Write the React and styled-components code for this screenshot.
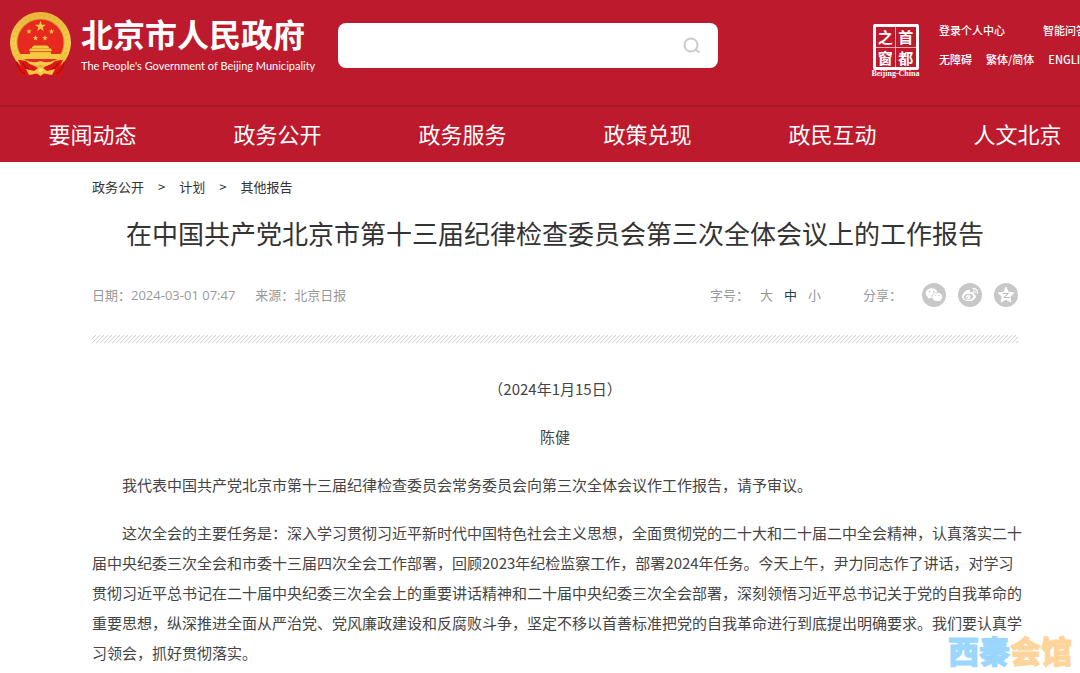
import React from 'react';
import styled, { createGlobalStyle } from 'styled-components';
import { RiWechatFill } from 'react-icons/ri';
import { FaWeibo } from 'react-icons/fa';


const GlobalStyle = createGlobalStyle`
    * {
        box-sizing: border-box;
    }
    body {
        margin: 0;
        background-color: #fff;
        color: #444;
        font-family: "Noto Sans CJK SC", sans-serif;
    }
    a {
        color: inherit;
        text-decoration: none;
    }
    button {
        padding: 0;
        border: 0;
        background: none;
        color: inherit;
        font: inherit;
        cursor: pointer;
    }
`

const Page = styled.div`
    position: relative;
    min-height: 100vh;
    overflow: hidden;
`

const Header = styled.header`
    background-color: #bd1a2d;
    color: #fff;
    white-space: nowrap;
`

const TopBar = styled.div`
    display: flex;
    align-items: flex-start;
    height: 105px;
    overflow: hidden;
`

const Brand = styled.a`
    display: flex;
    flex: 0 0 338px;
    gap: 8px;
    padding: 11px 0 0 9px;
`

const BrandText = styled.div`
    padding-top: 4px;
`

const BrandName = styled.div`
    font-size: 32px;
    font-weight: 700;
    line-height: 36px;
`

const BrandSub = styled.div`
    margin-top: 7px;
    font-family: Lato, "Noto Sans", sans-serif;
    font-size: 11px;
    line-height: 16px;
`

const SearchForm = styled.form`
    display: flex;
    align-items: center;
    flex: 0 1 380px;
    height: 45px;
    margin-top: 23px;
    padding: 0 16px;
    border-radius: 8px;
    background-color: #fff;
`

const SearchInput = styled.input`
    flex: 1;
    min-width: 0;
    height: 40px;
    border: 0;
    outline: 0;
    background: none;
    font-size: 16px;
`

const SearchButton = styled.button`
    display: flex;
`

const Tools = styled.div`
    display: flex;
    flex: 0 0 210px;
    gap: 18px;
    min-width: 0;
    margin-left: auto;
    padding-top: 20px;
`

const Seal = styled.a`
    display: flex;
    flex: 0 0 51px;
    flex-direction: column;
    align-items: center;
    padding-top: 4px;
`

const SealGrid = styled.div`
    display: grid;
    grid-template-columns: 1fr 1fr;
    gap: 1px;
    width: 46px;
    height: 46px;
    border: 3px solid #fff;
    border-radius: 2px;
    background-color: #e8a9b1;
`

const SealChar = styled.span`
    background-color: #bd1a2d;
    font-size: 15px;
    font-weight: 700;
    line-height: 19px;
    text-align: center;
`

const SealCaption = styled.span`
    font-family: "Liberation Serif", serif;
    font-size: 8px;
    font-weight: 700;
    line-height: 8px;
`

const ToolLinks = styled.div`
    display: flex;
    flex: none;
    flex-direction: column;
    gap: 9px;
`

const ToolRow = styled.div`
    display: flex;
    gap: ${props => props.$gap};
    font-size: 11px;
    font-weight: 500;
    line-height: 20px;
`

const Nav = styled.nav`
    display: flex;
    overflow: hidden;
    padding-bottom: 2px;
    border-top: 2px solid #a81728;
`

const NavLink = styled.a`
    flex: 0 0 185px;
    font-size: 22px;
    line-height: 53px;
    text-align: center;
`

const Article = styled.main`
    padding: 15px 62px 0 92px;
`

const Crumbs = styled.nav`
    display: flex;
    gap: 14px;
    color: #333;
    font-size: 13px;
    line-height: 20px;
`

const Title = styled.h1`
    margin: 18px 0 0;
    color: #333;
    font-size: 26px;
    font-weight: 400;
    line-height: 36px;
    text-align: center;
`

const Meta = styled.div`
    display: flex;
    align-items: center;
    margin-top: 32px;
    color: #999;
    font-family: "Open Sans", "Noto Sans CJK SC", sans-serif;
    font-size: 13px;
    line-height: 24px;
`

const Source = styled.span`
    margin-left: 20px;
`

const SizePicker = styled.div`
    display: flex;
    gap: 11px;
    margin-left: auto;
`

const SizeButton = styled.button`
    color: ${props => props.$active ? '#1d4350' : '#999'};
`

const Share = styled.div`
    display: flex;
    gap: 12px;
    margin-left: 42px;
`

const ShareLabel = styled.span`
    margin-right: 8px;
`

const ShareButton = styled.button`
    display: flex;
    align-items: center;
    justify-content: center;
    width: 24px;
    height: 24px;
    border-radius: 50%;
    background-color: #c8c8c8;
    color: #fff;
`

const Divider = styled.div`
    height: 8px;
    margin: 28px 0 31px;
    background-image: linear-gradient(135deg, transparent 36%, #d2d2d2 50%, transparent 64%);
    background-size: 4px 4px;
`

const Line = styled.p`
    margin: 0 0 18px;
    font-size: 15px;
    line-height: 30px;
    text-align: center;
`

const Paragraph = styled(Line)`
    margin-right: -6px;
    text-align: left;
    text-indent: 2em;

    &:last-child {
        margin-bottom: 0;
    }
`

const Watermark = styled.div`
    position: absolute;
    right: 8px;
    bottom: 5px;
    color: #9ad6fd;
    font-size: 31px;
    font-weight: 900;
    line-height: 36px;
    -webkit-text-stroke: 1px currentColor;
    pointer-events: none;
`

const WatermarkWarm = styled.span`
    color: #fdd59b;
`


const STAR = 'M0 -5 L1.2 -1.6 L4.8 -1.5 L1.9 .6 L2.9 4 L0 2 L-2.9 4 L-1.9 .6 L-4.8 -1.5 L-1.2 -1.6 Z';

const Emblem = () => (
    <svg width="64" height="68" viewBox="0 0 64 68" aria-hidden="true">
        <defs>
            <linearGradient id="gold" x1="0" y1="0" x2="0" y2="1">
                <stop offset="0" stopColor="#e9b53a" />
                <stop offset=".5" stopColor="#f5cf50" />
                <stop offset="1" stopColor="#eeb82f" />
            </linearGradient>
        </defs>
        <path d="M9 48 L8 62 Q13 67 20 64 L31 66 L43 64 Q50 67 55 62 L54 48 Z" fill="#d81414" />
        <circle cx="31.5" cy="31.5" r="30.5" fill="url(#gold)" />
        <circle cx="31.5" cy="31.5" r="27" fill="none" stroke="#d99a26" strokeWidth="3" strokeDasharray="2 3" opacity=".25" />
        <circle cx="31.5" cy="31.5" r="24" fill="#d79b27" />
        <circle cx="31.5" cy="31.5" r="23" fill="#e8291f" />
        <g fill="#f6c945">
            <path d={STAR} transform="translate(31.5 15.5) scale(1.15)" />
            <path d={STAR} transform="translate(20 20.5) scale(.6)" />
            <path d={STAR} transform="translate(42.5 20.5) scale(.6)" />
            <path d={STAR} transform="translate(26.5 27) scale(.6)" />
            <path d={STAR} transform="translate(36 27) scale(.6)" />
            <path d="M23 36 L25 34.5 H38 L40 36 V37.5 H42 L43 40 H20 L21 37.5 H23 Z" />
            <path d="M21 41 H42 V43 H52 L50 48 H13 L11 43 H21 Z" />
        </g>
        <path d="M23 37.5 H40 M21 41 H42" stroke="#e9a32e" strokeWidth="1" />
        <path d="M9 49 Q17 49 24 54 L29 57 L23 65 Q14 61 9 49 Z" fill="#dc1816" />
        <path d="M54 49 Q46 49 39 54 L34 57 L40 65 Q49 61 54 49 Z" fill="#dc1816" />
        <path d="M17 49 Q24 53 31.5 50 Q39 53 46 49 Q42 56 31.5 54.5 Q21 56 17 49 Z" fill="#f4cb4e" />
        <path d="M17 58 L25 60 L29 57 H34 L38 60 L46 58 L43 64 L35 62.5 L31.5 65 L28 62.5 L20 64 Z" fill="#f6c83f" />
        <path d="M8 51 Q9 60 16 63 M55 51 Q54 60 47 63 M14 52 Q16 57 20 58 M49 52 Q47 57 43 58" fill="none" stroke="#a90d12" strokeWidth="1.2" />
        <circle cx="31.5" cy="59.5" r="2" fill="#fbe27a" />
    </svg>
)

const SearchIcon = () => (
    <svg width="20" height="20" viewBox="0 0 20 20" fill="none" stroke="#ccc" strokeWidth="2" aria-hidden="true">
        <circle cx="9" cy="9" r="6.5" />
        <path d="M13 13 L17.5 16.5" />
    </svg>
)

const QzoneIcon = () => (
    <svg width="18" height="18" viewBox="0 0 18 18" aria-hidden="true">
        <path d="M9 1.2 L11.3 6.2 L16.9 6.9 L12.8 10.6 L13.9 16 L9 13.3 L4.1 16 L5.2 10.6 L1.1 6.9 L6.7 6.2 Z" fill="#fff" stroke="#fff" strokeLinejoin="round" />
        <path d="M6 7.5 H11.5 L6.8 11.5 H12.5" fill="none" stroke="#b8b8b8" strokeWidth="1" />
    </svg>
)

const navItems = ['要闻动态', '政务公开', '政务服务', '政策兑现', '政民互动', '人文北京'];


const App = () => {


    return(
        <Page>
            <GlobalStyle />
            <Header>
                <TopBar>
                    <Brand href="#">
                        <Emblem />
                        <BrandText>
                            <BrandName>北京市人民政府</BrandName>
                            <BrandSub>The People's Government of Beijing Municipality</BrandSub>
                        </BrandText>
                    </Brand>
                    <SearchForm role="search">
                        <SearchInput type="text" aria-label="搜索" />
                        <SearchButton type="button" aria-label="搜索"><SearchIcon /></SearchButton>
                    </SearchForm>
                    <Tools>
                        <Seal href="#">
                            <SealGrid>
                                <SealChar>之</SealChar>
                                <SealChar>首</SealChar>
                                <SealChar>窗</SealChar>
                                <SealChar>都</SealChar>
                            </SealGrid>
                            <SealCaption>Beijing-China</SealCaption>
                        </Seal>
                        <ToolLinks>
                            <ToolRow $gap="38px">
                                <a href="#">登录个人中心</a>
                                <a href="#">智能问答</a>
                            </ToolRow>
                            <ToolRow $gap="14px">
                                <a href="#">无障碍</a>
                                <a href="#">繁体/简体</a>
                                <a href="#">ENGLISH</a>
                            </ToolRow>
                        </ToolLinks>
                    </Tools>
                </TopBar>
                <Nav>
                    {navItems.map(item => <NavLink href="#" key={item}>{item}</NavLink>)}
                </Nav>
            </Header>
            <Article>
                <Crumbs>
                    <a href="#">政务公开</a>
                    <span>&gt;</span>
                    <a href="#">计划</a>
                    <span>&gt;</span>
                    <a href="#">其他报告</a>
                </Crumbs>
                <Title>在中国共产党北京市第十三届纪律检查委员会第三次全体会议上的工作报告</Title>
                <Meta>
                    <span>日期：2024-03-01 07:47</span>
                    <Source>来源：北京日报</Source>
                    <SizePicker>
                        <span>字号：</span>
                        <SizeButton>大</SizeButton>
                        <SizeButton $active>中</SizeButton>
                        <SizeButton>小</SizeButton>
                    </SizePicker>
                    <Share>
                        <ShareLabel>分享：</ShareLabel>
                        <ShareButton aria-label="微信"><RiWechatFill size={18} /></ShareButton>
                        <ShareButton aria-label="微博"><FaWeibo size={16} /></ShareButton>
                        <ShareButton aria-label="QQ空间"><QzoneIcon /></ShareButton>
                    </Share>
                </Meta>
                <Divider />
                <Line>（2024年1月15日）</Line>
                <Line>陈健</Line>
                <Paragraph>我代表中国共产党北京市第十三届纪律检查委员会常务委员会向第三次全体会议作工作报告，请予审议。</Paragraph>
                <Paragraph>
                    这次全会的主要任务是：深入学习贯彻习近平新时代中国特色社会主义思想，全面贯彻党的二十大和二十届二中全会精神，认真落实二十届中央纪委三次全会和市委十三届四次全会工作部署，回顾2023年纪检监察工作，部署2024年任务。今天上午，尹力同志作了讲话，对学习贯彻习近平总书记在二十届中央纪委三次全会上的重要讲话精神和二十届中央纪委三次全会部署，深刻领悟习近平总书记关于党的自我革命的重要思想，纵深推进全面从严治党、党风廉政建设和反腐败斗争，坚定不移以首善标准把党的自我革命进行到底提出明确要求。我们要认真学习领会，抓好贯彻落实。
                </Paragraph>
            </Article>
            <Watermark>西秦<WatermarkWarm>会馆</WatermarkWarm></Watermark>
        </Page>
    );



}


export default App;
